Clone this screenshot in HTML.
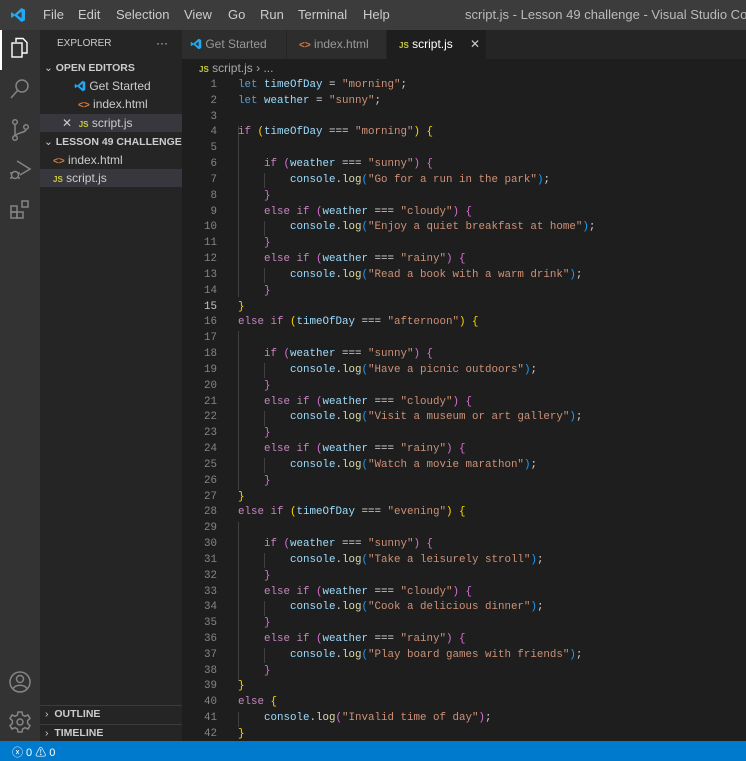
<!DOCTYPE html>
<html><head><meta charset="utf-8"><style>
*{margin:0;padding:0;box-sizing:border-box}
body{width:746px;height:761px;overflow:hidden;background:#1e1e1e;font-family:"Liberation Sans",sans-serif;font-size:13px;color:#ccc;position:relative}
.abs{position:absolute}
#title{left:0;top:0;width:746px;height:30px;background:#3c3c3c;color:#ccc;overflow:hidden}
#title span{position:absolute;top:7px;font-size:13px;white-space:nowrap}
#act{left:0;top:30px;width:40px;height:711px;background:#333}
#side{left:40px;top:30px;width:142px;height:711px;background:#252526}
#tabs{left:182px;top:30px;width:564px;height:29px;background:#252526}
.tab{position:absolute;top:0;height:29px;background:#2d2d2d;color:#999;font-size:12px;line-height:29px;border-right:1px solid #252526}
.si{position:absolute;left:0;width:142px;height:18px;line-height:18px;font-size:12px;color:#ccc;white-space:nowrap}
.hd{font-weight:bold;font-size:10.5px;color:#ccc}
.js{color:#cbcb41;font-weight:bold;font-size:8px;font-family:"Liberation Sans",sans-serif}
.ht{color:#e37933;font-size:10px;font-weight:bold}
#code{left:182px;top:78px;width:564px;font-family:"Liberation Mono",monospace;font-size:10.83px}
.l{height:15.83px;line-height:15.83px;white-space:pre;position:relative}
.n{position:absolute;left:0;width:35px;text-align:right;color:#858585}
.t{position:absolute;left:56px;color:#d4d4d4}
.k{color:#569cd6}.c{color:#c586c0}.v{color:#9cdcfe}.s{color:#ce9178}.f{color:#dcdcaa}.y{color:#ffd700}.p{color:#da70d6}.b{color:#179fff}
.g{position:absolute;width:1px;background:#404040}
#status{left:0;top:741px;width:746px;height:20px;background:#007acc;color:#fff;font-size:11px}
</style></head><body>
<div id="title" class="abs">
<svg class="abs" style="left:10px;top:7px" width="16" height="16" viewBox="0 0 16 16"><path d="M11.5 1 L15 2.7 V13.3 L11.5 15 L4.5 8.6 L1.8 10.7 L1 10.2 V5.8 L1.8 5.3 L4.5 7.4 Z M11.5 4.6 L7.3 8 L11.5 11.4 Z" fill="#23a9f2"/></svg>
<span style="left:43px">File</span><span style="left:78px">Edit</span><span style="left:116px">Selection</span><span style="left:184px">View</span><span style="left:228px">Go</span><span style="left:260px">Run</span><span style="left:298px">Terminal</span><span style="left:363px">Help</span>
<span style="left:465px;color:#bbb">script.js - Lesson 49 challenge - Visual Studio Code [A</span>
</div>
<div id="act" class="abs">
<div class="abs" style="left:0;top:0;width:2px;height:40px;background:#fff"></div>
<svg class="abs" style="left:8px;top:6px" width="24" height="24" viewBox="0 0 24 24" fill="none" stroke="#fff" stroke-width="1.4"><path d="M8 6 V2.5 H15 L19 6.5 V17 H14"/><rect x="4" y="7" width="10" height="14"/></svg>
<svg class="abs" style="left:8px;top:47px" width="24" height="24" viewBox="0 0 24 24" fill="none" stroke="#858585" stroke-width="1.5"><circle cx="14" cy="9" r="6"/><path d="M10 13 L3 21"/></svg>
<svg class="abs" style="left:8px;top:88px" width="24" height="24" viewBox="0 0 24 24" fill="none" stroke="#858585" stroke-width="1.5"><circle cx="7" cy="4" r="2.3"/><circle cx="7" cy="20" r="2.3"/><circle cx="18" cy="9" r="2.3"/><path d="M7 6.3 V17.7 M18 11.3 C18 15 10 14 7.5 17.5"/></svg>
<svg class="abs" style="left:8px;top:128px" width="24" height="24" viewBox="0 0 24 24" fill="none" stroke="#858585" stroke-width="1.5"><path d="M9 3 L22 11 L12 17"/><circle cx="7" cy="17" r="3.5"/><path d="M2 15 H4 M10 15 H12 M2 20 H4 M10 20 H12"/></svg>
<svg class="abs" style="left:8px;top:168px" width="24" height="24" viewBox="0 0 24 24" fill="none" stroke="#858585" stroke-width="1.5"><rect x="3" y="8" width="6" height="6"/><rect x="3" y="14" width="6" height="6"/><rect x="9" y="14" width="6" height="6"/><rect x="14" y="3" width="6" height="6"/></svg>
<svg class="abs" style="left:8px;top:640px" width="24" height="24" viewBox="0 0 24 24" fill="none" stroke="#858585" stroke-width="1.5"><circle cx="12" cy="12" r="10"/><circle cx="12" cy="9" r="3.5"/><path d="M5 19 C7 14 17 14 19 19"/></svg>
<svg class="abs" style="left:8px;top:680px" width="24" height="24" viewBox="0 0 24 24" fill="none" stroke="#858585" stroke-width="1.5"><circle cx="12" cy="12" r="3"/><path d="M10 2 H14 L14.6 5 L17 6.3 L20 5 L22 8.5 L19.6 10.6 V13.4 L22 15.5 L20 19 L17 17.7 L14.6 19 L14 22 H10 L9.4 19 L7 17.7 L4 19 L2 15.5 L4.4 13.4 V10.6 L2 8.5 L4 5 L7 6.3 L9.4 5 Z"/></svg>
</div>
<div id="side" class="abs">
<div class="si" style="top:5px;left:17px;font-size:10px">EXPLORER</div>
<div class="si" style="top:4px;left:116px;width:20px;font-size:12px">···</div>
<div class="si hd" style="top:29px"><span style="margin-left:4px;font-weight:normal">⌄</span> OPEN EDITORS</div>
<div class="si" style="top:47px;padding-left:34px"><svg width="12" height="12" viewBox="0 0 16 16" style="vertical-align:-2px"><path d="M11.5 1 L15 2.7 V13.3 L11.5 15 L4.5 8.6 L1.8 10.7 L1 10.2 V5.8 L1.8 5.3 L4.5 7.4 Z M11.5 4.6 L7.3 8 L11.5 11.4 Z" fill="#23a9f2"/></svg> Get Started</div>
<div class="si" style="top:65px;padding-left:38px"><span class="ht">&lt;&gt;</span> index.html</div>
<div class="si" style="top:84px;background:#37373d;padding-left:22px"><span style="color:#ccc">✕</span>&nbsp;&nbsp;<span class="js">JS</span> script.js</div>
<div class="si hd" style="top:103px"><span style="margin-left:4px;font-weight:normal">⌄</span> LESSON 49 CHALLENGE</div>
<div class="si" style="top:121px;padding-left:13px"><span class="ht">&lt;&gt;</span> index.html</div>
<div class="si" style="top:139px;background:#37373d;padding-left:13px"><span class="js">JS</span> script.js</div>
<div class="abs" style="left:0;top:675px;width:142px;height:1px;background:#3c3c3c"></div>
<div class="si hd" style="top:675px"><span style="margin-left:5px;font-weight:normal">›</span>&nbsp; OUTLINE</div>
<div class="abs" style="left:0;top:694px;width:142px;height:1px;background:#3c3c3c"></div>
<div class="si hd" style="top:694px"><span style="margin-left:5px;font-weight:normal">›</span>&nbsp; TIMELINE</div>
</div>
<div id="tabs" class="abs">
<div class="tab" style="left:0;width:105px;padding-left:8px"><svg width="12" height="12" viewBox="0 0 16 16" style="vertical-align:-2px"><path d="M11.5 1 L15 2.7 V13.3 L11.5 15 L4.5 8.6 L1.8 10.7 L1 10.2 V5.8 L1.8 5.3 L4.5 7.4 Z M11.5 4.6 L7.3 8 L11.5 11.4 Z" fill="#23a9f2"/></svg> Get Started</div>
<div class="tab" style="left:105px;width:100px;padding-left:12px"><span class="ht">&lt;&gt;</span> index.html</div>
<div class="tab" style="left:205px;width:100px;padding-left:12px;background:#1e1e1e;color:#fff"><span class="js">JS</span> script.js<span style="position:absolute;left:83px;color:#ccc">✕</span></div>
</div>
<div class="abs" style="left:199px;top:60px;font-size:12px;color:#a9a9a9;height:16px;line-height:16px"><span class="js">JS</span> script.js › ...</div>
<div class="g" style="left:238px;top:126px;height:171px"></div>
<div class="g" style="left:264px;top:173px;height:15px"></div>
<div class="g" style="left:264px;top:221px;height:15px"></div>
<div class="g" style="left:264px;top:268px;height:15px"></div>
<div class="g" style="left:238px;top:331px;height:159px"></div>
<div class="g" style="left:264px;top:363px;height:15px"></div>
<div class="g" style="left:264px;top:411px;height:15px"></div>
<div class="g" style="left:264px;top:458px;height:15px"></div>
<div class="g" style="left:238px;top:522px;height:159px"></div>
<div class="g" style="left:264px;top:553px;height:15px"></div>
<div class="g" style="left:264px;top:601px;height:15px"></div>
<div class="g" style="left:264px;top:648px;height:15px"></div>
<div class="g" style="left:238px;top:712px;height:15px"></div>
<div id="code" class="abs">
<div class="l"><span class="n">1</span><span class="t"><span class="k">let</span> <span class="v">timeOfDay</span> = <span class="s">"morning"</span>;</span></div>
<div class="l"><span class="n">2</span><span class="t"><span class="k">let</span> <span class="v">weather</span> = <span class="s">"sunny"</span>;</span></div>
<div class="l"><span class="n">3</span></div>
<div class="l"><span class="n">4</span><span class="t"><span class="c">if</span> <span class="y">(</span><span class="v">timeOfDay</span> === <span class="s">"morning"</span><span class="y">)</span> <span class="y">{</span></span></div>
<div class="l"><span class="n">5</span></div>
<div class="l"><span class="n">6</span><span class="t">    <span class="c">if</span> <span class="p">(</span><span class="v">weather</span> === <span class="s">"sunny"</span><span class="p">)</span> <span class="p">{</span></span></div>
<div class="l"><span class="n">7</span><span class="t">        <span class="v">console</span>.<span class="f">log</span><span class="b">(</span><span class="s">"Go for a run in the park"</span><span class="b">)</span>;</span></div>
<div class="l"><span class="n">8</span><span class="t">    <span class="p">}</span></span></div>
<div class="l"><span class="n">9</span><span class="t">    <span class="c">else if</span> <span class="p">(</span><span class="v">weather</span> === <span class="s">"cloudy"</span><span class="p">)</span> <span class="p">{</span></span></div>
<div class="l"><span class="n">10</span><span class="t">        <span class="v">console</span>.<span class="f">log</span><span class="b">(</span><span class="s">"Enjoy a quiet breakfast at home"</span><span class="b">)</span>;</span></div>
<div class="l"><span class="n">11</span><span class="t">    <span class="p">}</span></span></div>
<div class="l"><span class="n">12</span><span class="t">    <span class="c">else if</span> <span class="p">(</span><span class="v">weather</span> === <span class="s">"rainy"</span><span class="p">)</span> <span class="p">{</span></span></div>
<div class="l"><span class="n">13</span><span class="t">        <span class="v">console</span>.<span class="f">log</span><span class="b">(</span><span class="s">"Read a book with a warm drink"</span><span class="b">)</span>;</span></div>
<div class="l"><span class="n">14</span><span class="t">    <span class="p">}</span></span></div>
<div class="l"><span class="n" style="color:#c6c6c6">15</span><span class="t"><span class="y">}</span></span></div>
<div class="l"><span class="n">16</span><span class="t"><span class="c">else if</span> <span class="y">(</span><span class="v">timeOfDay</span> === <span class="s">"afternoon"</span><span class="y">)</span> <span class="y">{</span></span></div>
<div class="l"><span class="n">17</span></div>
<div class="l"><span class="n">18</span><span class="t">    <span class="c">if</span> <span class="p">(</span><span class="v">weather</span> === <span class="s">"sunny"</span><span class="p">)</span> <span class="p">{</span></span></div>
<div class="l"><span class="n">19</span><span class="t">        <span class="v">console</span>.<span class="f">log</span><span class="b">(</span><span class="s">"Have a picnic outdoors"</span><span class="b">)</span>;</span></div>
<div class="l"><span class="n">20</span><span class="t">    <span class="p">}</span></span></div>
<div class="l"><span class="n">21</span><span class="t">    <span class="c">else if</span> <span class="p">(</span><span class="v">weather</span> === <span class="s">"cloudy"</span><span class="p">)</span> <span class="p">{</span></span></div>
<div class="l"><span class="n">22</span><span class="t">        <span class="v">console</span>.<span class="f">log</span><span class="b">(</span><span class="s">"Visit a museum or art gallery"</span><span class="b">)</span>;</span></div>
<div class="l"><span class="n">23</span><span class="t">    <span class="p">}</span></span></div>
<div class="l"><span class="n">24</span><span class="t">    <span class="c">else if</span> <span class="p">(</span><span class="v">weather</span> === <span class="s">"rainy"</span><span class="p">)</span> <span class="p">{</span></span></div>
<div class="l"><span class="n">25</span><span class="t">        <span class="v">console</span>.<span class="f">log</span><span class="b">(</span><span class="s">"Watch a movie marathon"</span><span class="b">)</span>;</span></div>
<div class="l"><span class="n">26</span><span class="t">    <span class="p">}</span></span></div>
<div class="l"><span class="n">27</span><span class="t"><span class="y">}</span></span></div>
<div class="l"><span class="n">28</span><span class="t"><span class="c">else if</span> <span class="y">(</span><span class="v">timeOfDay</span> === <span class="s">"evening"</span><span class="y">)</span> <span class="y">{</span></span></div>
<div class="l"><span class="n">29</span></div>
<div class="l"><span class="n">30</span><span class="t">    <span class="c">if</span> <span class="p">(</span><span class="v">weather</span> === <span class="s">"sunny"</span><span class="p">)</span> <span class="p">{</span></span></div>
<div class="l"><span class="n">31</span><span class="t">        <span class="v">console</span>.<span class="f">log</span><span class="b">(</span><span class="s">"Take a leisurely stroll"</span><span class="b">)</span>;</span></div>
<div class="l"><span class="n">32</span><span class="t">    <span class="p">}</span></span></div>
<div class="l"><span class="n">33</span><span class="t">    <span class="c">else if</span> <span class="p">(</span><span class="v">weather</span> === <span class="s">"cloudy"</span><span class="p">)</span> <span class="p">{</span></span></div>
<div class="l"><span class="n">34</span><span class="t">        <span class="v">console</span>.<span class="f">log</span><span class="b">(</span><span class="s">"Cook a delicious dinner"</span><span class="b">)</span>;</span></div>
<div class="l"><span class="n">35</span><span class="t">    <span class="p">}</span></span></div>
<div class="l"><span class="n">36</span><span class="t">    <span class="c">else if</span> <span class="p">(</span><span class="v">weather</span> === <span class="s">"rainy"</span><span class="p">)</span> <span class="p">{</span></span></div>
<div class="l"><span class="n">37</span><span class="t">        <span class="v">console</span>.<span class="f">log</span><span class="b">(</span><span class="s">"Play board games with friends"</span><span class="b">)</span>;</span></div>
<div class="l"><span class="n">38</span><span class="t">    <span class="p">}</span></span></div>
<div class="l"><span class="n">39</span><span class="t"><span class="y">}</span></span></div>
<div class="l"><span class="n">40</span><span class="t"><span class="c">else</span> <span class="y">{</span></span></div>
<div class="l"><span class="n">41</span><span class="t">    <span class="v">console</span>.<span class="f">log</span><span class="p">(</span><span class="s">"Invalid time of day"</span><span class="p">)</span>;</span></div>
<div class="l"><span class="n">42</span><span class="t"><span class="y">}</span></span></div>
</div>
<div id="status" class="abs"><span class="abs" style="left:12px;top:3px">ⓧ 0 ⚠ 0</span></div>
</body></html>
